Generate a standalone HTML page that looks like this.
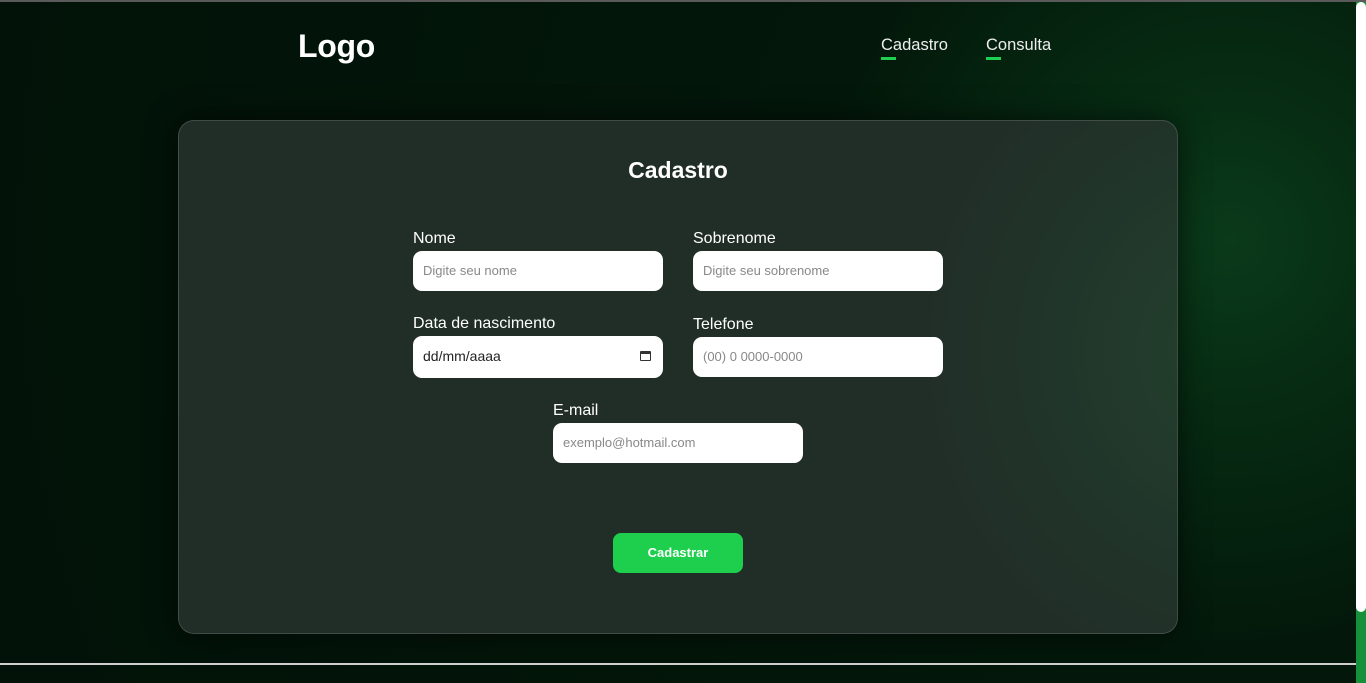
<!DOCTYPE html>
<html><head><style>
*{margin:0;padding:0;box-sizing:border-box}
body{width:1366px;height:683px;overflow:hidden;font-family:"Liberation Sans",sans-serif;background:#03160a;position:relative}
.bg{position:absolute;left:0;top:0;width:1356px;height:683px;background:radial-gradient(circle at 1230px 240px,#0a3a1a 0,#062a12 180px,#03170a 420px,#021208 100%)}
.topline{position:absolute;left:0;top:0;width:1366px;height:2px;background:#5a5a5a}
.bottomline{position:absolute;left:0;top:663px;width:1356px;height:2px;background:#cfcfcf}
.sb{position:absolute;left:1356px;top:2px;width:10px;height:681px;background:#14913a}
.thumb{position:absolute;left:1356px;top:2px;width:10px;height:610px;background:#fff;border-radius:5px}
.logo{position:absolute;left:298px;top:28px;color:#fff;font-weight:bold;font-size:32px;letter-spacing:-0.3px}
.nav{position:absolute;top:36px;color:#eee;font-size:16.5px}
.nav span{position:absolute;left:0;top:21px;width:15px;height:3px;background:#1fcf4f}
.card{position:absolute;left:178px;top:120px;width:1000px;height:514px;border-radius:16px;background:radial-gradient(ellipse 300px 320px at 1060px 230px,#234530 0,rgba(35,58,44,0) 100%),#212e27;background:radial-gradient(ellipse 320px 340px at 1060px 230px,#22412d 0,#21352a 60%,#212e27 100%);border:1px solid rgba(255,255,255,0.14);box-shadow:0 0 30px rgba(0,0,0,0.6)}
h1{position:absolute;left:-5px;width:100%;top:157px;text-align:center;color:#fff;font-size:23px;font-weight:bold}
.lab{position:absolute;color:#fff;font-size:16px}
.in{position:absolute;width:250px;height:40px;background:#fff;border-radius:9px;color:#888;font-size:13px;padding:12px 10px}
.btn{position:absolute;left:613px;top:533px;width:130px;height:40px;background:#1ecf4d;border-radius:8px;color:#fff;font-weight:bold;font-size:13px;text-align:center;line-height:40px}
</style></head><body>
<div class="bg"></div><div class="topline"></div>
<div class="logo">Logo</div>
<div class="nav" style="left:881px">Cadastro<span></span></div>
<div class="nav" style="left:986px">Consulta<span></span></div>
<div class="card" style="background:radial-gradient(ellipse 320px 340px at 1060px 230px,#22412d 0,#21352a 60%,#212e27 100%)"></div>
<h1>Cadastro</h1>
<div class="lab" style="left:413px;top:230px">Nome</div>
<div class="in" style="left:413px;top:251px">Digite seu nome</div>
<div class="lab" style="left:693px;top:230px">Sobrenome</div>
<div class="in" style="left:693px;top:251px">Digite seu sobrenome</div>
<div class="lab" style="left:413px;top:315px">Data de nascimento</div>
<div class="in" style="left:413px;top:336px;height:42px;color:#222;font-size:14px">dd/mm/aaaa<span style="position:absolute;right:12px;top:15px;width:11px;height:10px;border:1.5px solid #333;border-top-width:3px;border-radius:1px"></span></div>
<div class="lab" style="left:693px;top:316px">Telefone</div>
<div class="in" style="left:693px;top:337px">(00) 0 0000-0000</div>
<div class="lab" style="left:553px;top:402px">E-mail</div>
<div class="in" style="left:553px;top:423px">exemplo@hotmail.com</div>
<div class="btn">Cadastrar</div>
<div class="bottomline"></div>
<div class="sb"></div><div class="thumb"></div>
</body></html>
